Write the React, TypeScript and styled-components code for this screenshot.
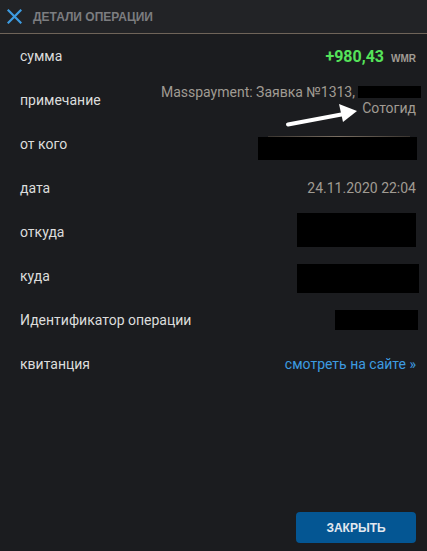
import React from "react";
import styled, { createGlobalStyle } from "styled-components";

const Global = createGlobalStyle`
  html, body { margin: 0; padding: 0; background: #1b1c1f; }
  body { font-family: Roboto, "Liberation Sans", sans-serif; }
  #root { min-height: 100vh; }
`;

const Page = styled.div`
  position: relative;
  display: flex;
  flex-direction: column;
  min-height: 100vh;
  background: #1b1c1f;
`;

const Header = styled.div`
  display: flex;
  align-items: center;
  gap: 11px;
  height: 33px;
  padding: 0 0 0 7px;
  background: #222326;
  border-bottom: 1px solid #6f6459;
`;

const Title = styled.div`
  font-family: "Liberation Sans", Arial, sans-serif;
  font-weight: 700;
  font-size: 12px;
  color: #7c7d80;
  text-transform: uppercase;
`;

const List = styled.div`
  display: flex;
  flex-direction: column;
  flex: 1;
`;

const Row = styled.div`
  display: flex;
  align-items: center;
  justify-content: space-between;
  height: 44px;
  padding: 0 11px 0 20px;
`;

const Label = styled.div`
  font-size: 14px;
  color: #dcdcdc;
  white-space: nowrap;
`;

const Value = styled.div`
  font-size: 14px;
  color: #a09b93;
  text-align: right;
  line-height: 16px;
`;

const Amount = styled.div`
  display: flex;
  align-items: baseline;
  gap: 7px;
`;

const Green = styled.span`
  font-size: 16px;
  font-weight: 700;
  color: #55e35a;
`;

const Currency = styled.span`
  font-family: "Liberation Sans", Arial, sans-serif;
  font-size: 10px;
  font-weight: 700;
  color: #a09b93;
`;

const Note = styled.div`
  display: flex;
  flex-direction: column;
  align-items: flex-end;
  font-size: 14px;
  color: #a09b93;
  line-height: 16px;
  margin-top: -1px;
`;

const NoteLine = styled.div`
  display: flex;
  align-items: center;
  white-space: nowrap;
`;

const Redact = styled.span<{ $w: number; $h: number; $mr?: number; $mt?: number; $ml?: number }>`
  display: inline-block;
  flex: none;
  width: ${(p) => p.$w}px;
  height: ${(p) => p.$h}px;
  background: #000;
  margin-right: ${(p) => -(p.$mr ?? 0)}px;
  margin-left: ${(p) => p.$ml ?? 0}px;
  margin-top: ${(p) => p.$mt ?? 0}px;
`;

const LinedRedact = styled(Redact)`
  position: relative;
  &::before {
    content: "";
    position: absolute;
    left: 10px;
    right: 7px;
    top: -1px;
    height: 1px;
    background: linear-gradient(90deg, #3a3530, #7a6f63 50%, #3a3530);
  }
`;

const Link = styled.a`
  font-size: 14px;
  color: #3d9be0;
  text-decoration: none;
  cursor: pointer;
`;

const Footer = styled.div`
  display: flex;
  justify-content: flex-end;
  padding: 0 11px 8px 0;
`;

const CloseButton = styled.button`
  width: 120px;
  height: 31px;
  border: none;
  border-radius: 4px;
  background: #045693;
  color: #e2e8ef;
  font-family: "Liberation Sans", Arial, sans-serif;
  font-weight: 700;
  font-size: 12px;
  text-transform: uppercase;
  cursor: pointer;
`;

const CloseIcon = () => (
  <svg width="15" height="15" viewBox="0 0 15 15" style={{ display: "block" }}>
    <path d="M1.5 1.5 L13.5 13.5 M13.5 1.5 L1.5 13.5" stroke="#3d9be0" strokeWidth="2.2" strokeLinecap="square" />
  </svg>
);

const ArrowOverlay = styled.svg`
  position: absolute;
  left: 0;
  top: 0;
  pointer-events: none;
`;

export default function App() {
  return (
    <Page>
      <Global />
      <Header>
        <CloseIcon />
        <Title>Детали операции</Title>
      </Header>
      <List>
        <Row>
          <Label>сумма</Label>
          <Amount>
            <Green>+980,43</Green>
            <Currency>WMR</Currency>
          </Amount>
        </Row>
        <Row>
          <Label>примечание</Label>
          <Note>
            <NoteLine>
              Masspayment: Заявка №1313,
              <Redact $w={63} $h={12} $mr={5} $ml={3} $mt={1} />
            </NoteLine>
            <NoteLine>Сотогид</NoteLine>
          </Note>
        </Row>
        <Row>
          <Label>от кого</Label>
          <LinedRedact $w={159} $h={23} $mr={1} $mt={9} />
        </Row>
        <Row>
          <Label>дата</Label>
          <Value>24.11.2020 22:04</Value>
        </Row>
        <Row>
          <Label>откуда</Label>
          <Redact $w={119} $h={34} $mt={-4} />
        </Row>
        <Row>
          <Label>куда</Label>
          <Redact $w={122} $h={29} $mr={3} $mt={5} />
        </Row>
        <Row>
          <Label>Идентификатор операции</Label>
          <Redact $w={83} $h={20} $mr={2} />
        </Row>
        <Row>
          <Label>квитанция</Label>
          <Link>смотреть на сайте »</Link>
        </Row>
      </List>
      <Footer>
        <CloseButton>Закрыть</CloseButton>
      </Footer>
      <ArrowOverlay width="427" height="551" viewBox="0 0 427 551">
        <path d="M288 124.5 L344 114" stroke="#ffffff" strokeWidth="4" strokeLinecap="round" />
        <polygon points="357,111 339,104 343,122" fill="#ffffff" />
      </ArrowOverlay>
    </Page>
  );
}
